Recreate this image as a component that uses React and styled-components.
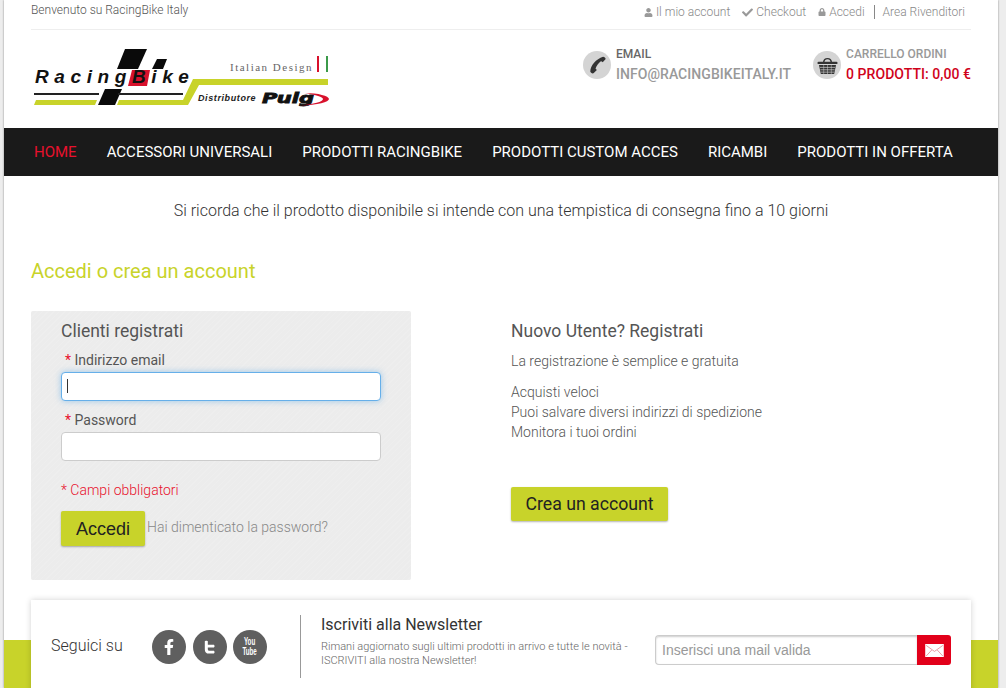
import React from "react";
import styled, { createGlobalStyle } from "styled-components";
import { FaUser, FaCheck, FaLock, FaFacebookF } from "react-icons/fa";

const GlobalStyle = createGlobalStyle`
  html, body {
    margin: 0;
    height: 688px;
    overflow: hidden;
    background: #ededed;
  }
  * { box-sizing: border-box; }
`;

const NAV_ITEMS = [
  "Home",
  "Accessori universali",
  "Prodotti RacingBike",
  "Prodotti custom acces",
  "Ricambi",
  "Prodotti in offerta",
];

const Logo = () => (
  <LogoSvg viewBox="31 46 300 62" width="300" height="62">
    <polygon points="125,49 147,49 138,69 117,69" fill="#0a0a0a" />
    <polygon points="157,59 167,59 163,69 152,69" fill="#0a0a0a" />
    <polygon points="132,70 150,70 147,86 128,86" fill="#d8112c" />
    <polygon points="105,89 122,89 115,105 98,105" fill="#0a0a0a" />
    <rect x="34" y="93" width="65" height="2" fill="#222" />
    <rect x="118" y="93" width="65" height="2" fill="#222" />
    <polygon points="36,100 97,100 95,105 34,105" fill="#c8d32a" />
    <polygon points="119,100 183,100 193,79 328,79 328,85 199,85 188,105 117,105" fill="#c8d32a" />
    <LogoName x="35" y="83">RacingBike</LogoName>
    <LogoTag x="230" y="71">Italian Design</LogoTag>
    <rect x="317" y="56" width="2" height="16" fill="#d8112c" />
    <rect x="326" y="56" width="2" height="16" fill="#3b9a4a" />
    <LogoSub x="198" y="101">Distributore</LogoSub>
    <LogoPuig x="262" y="103" textLength="52" lengthAdjust="spacingAndGlyphs">Puig</LogoPuig>
    <path d="M305 93 C318 93 329 96 329 99 C329 102 318 105 300 105.500 C314 104 323 102 323 99 C323 97 316 95 305 93Z" fill="#d8112c" />
  </LogoSvg>
);

const PhoneIcon = () => (
  <svg viewBox="0 0 24 24" width="21" height="21">
    <path
      d="M19.500 2c1.500.2 2.800 1.300 3 2.700l-3.400 3.600c-.7-.5-1.300-1-2.100-1.100-2.700 2-5 5.200-6.100 8.200.4.700.9 1.200 1.500 1.700l-3.800 3.800c-1.600.5-3.300-.5-3.700-2C5 12 11.500 4.500 19.500 2z"
      fill="#333"
    />
  </svg>
);

const BasketIcon = () => (
  <svg viewBox="0 0 22 20" width="21" height="19">
    <path d="M7 6.500 C7.500 1.500 14.500 1.500 15 6.500" fill="none" stroke="#333" strokeWidth="1.500" />
    <rect x="0.500" y="6" width="21" height="2.500" rx="1" fill="#333" />
    <path d="M2 9.500 H20 L18 19 H4 Z" fill="#333" />
    <path d="M3 12 H19 M3.500 14.500 H18.500 M4 17 H18" stroke="#d4d4d4" strokeWidth="0.700" />
    <path d="M7 9.500 V19 M11 9.500 V19 M15 9.500 V19" stroke="#d4d4d4" strokeWidth="0.500" />
  </svg>
);

const TwitterT = () => (
  <svg viewBox="0 0 16 16" width="15" height="15">
    <path
      d="M3 1.500c0-.9 3.200-.9 3.200 0V5h6c1.600 0 1.600 3 0 3h-6v1.500c0 1.300.8 2 2 2h4c1.600 0 1.600 3 0 3H7.500C4.500 14.500 3 12.800 3 10z"
      fill="#fff"
    />
  </svg>
);

const MailIcon = () => (
  <svg viewBox="0 0 20 14" width="19" height="13">
    <rect width="20" height="14" fill="#fff" />
    <path d="M1 1.500 L10 8 L19 1.500 M1 13 L7 6.500 M19 13 L13 6.500" fill="none" stroke="#e58a94" strokeWidth="0.9" />
  </svg>
);

const App = () => {
  return (
    <Page>
      <GlobalStyle />
      <Inner>
        <TopBar>
          <Welcome>Benvenuto su RacingBike Italy</Welcome>
          <TopLinks>
            <TopLink><FaUser size={9} /> Il mio account</TopLink>
            <TopLink><FaCheck size={11} /> Checkout</TopLink>
            <TopLink><FaLock size={8} /> Accedi</TopLink>
            <TopSeparator />
            <TopLink>Area Rivenditori</TopLink>
          </TopLinks>
        </TopBar>
        <Header>
          <Logo />
          <HeaderInfo>
            <InfoBlock>
              <InfoCircle><PhoneIcon /></InfoCircle>
              <div>
                <InfoLabel>EMAIL</InfoLabel>
                <InfoValue>INFO@RACINGBIKEITALY.IT</InfoValue>
              </div>
            </InfoBlock>
            <InfoBlock>
              <InfoCircle><BasketIcon /></InfoCircle>
              <div>
                <InfoLabel $muted>CARRELLO ORDINI</InfoLabel>
                <InfoValue $red>0 PRODOTTI: 0,00 €</InfoValue>
              </div>
            </InfoBlock>
          </HeaderInfo>
        </Header>
      </Inner>

      <Nav>
        {NAV_ITEMS.map((item, index) => (
          <NavItem key={item} $active={index === 0}>{item}</NavItem>
        ))}
      </Nav>

      <Notice>Si ricorda che il prodotto disponibile si intende con una tempistica di consegna fino a 10 giorni</Notice>

      <Inner>
        <PageTitle>Accedi o crea un account</PageTitle>
        <Columns>
          <LoginPanel>
            <PanelTitle>Clienti registrati</PanelTitle>
            <FieldLabel><Star>*</Star> Indirizzo email</FieldLabel>
            <InputWrap>
              <TextInput $focused type="text" />
              <Caret />
            </InputWrap>
            <FieldLabel><Star>*</Star> Password</FieldLabel>
            <InputWrap>
              <TextInput type="password" />
            </InputWrap>
            <Required>* Campi obbligatori</Required>
            <LoginActions>
              <LoginButton>Accedi</LoginButton>
              <Forgot>Hai dimenticato la password?</Forgot>
            </LoginActions>
          </LoginPanel>
          <RegisterColumn>
            <PanelTitle>Nuovo Utente? Registrati</PanelTitle>
            <Lead>La registrazione è semplice e gratuita</Lead>
            <Benefits>
              <div>Acquisti veloci</div>
              <div>Puoi salvare diversi indirizzi di spedizione</div>
              <div>Monitora i tuoi ordini</div>
            </Benefits>
            <CreateButton>Crea un account</CreateButton>
          </RegisterColumn>
        </Columns>
      </Inner>

      <FooterBand>
        <FooterCard>
          <FollowText>Seguici su</FollowText>
          <Socials>
            <Social><FaFacebookF size={16} /></Social>
            <Social><TwitterT /></Social>
            <Social><YouTubeText>You<br />Tube</YouTubeText></Social>
          </Socials>
          <Divider />
          <NewsText>
            <NewsTitle>Iscriviti alla Newsletter</NewsTitle>
            <NewsDesc>Rimani aggiornato sugli ultimi prodotti in arrivo e tutte le novità - ISCRIVITI alla nostra Newsletter!</NewsDesc>
          </NewsText>
          <NewsForm>
            <NewsInput placeholder="Inserisci una mail valida" />
            <NewsButton><MailIcon /></NewsButton>
          </NewsForm>
        </FooterCard>
      </FooterBand>
    </Page>
  );
};

const Page = styled.div`
  width: 994px;
  height: 688px;
  margin-left: 4px;
  background: #fff;
  box-shadow: 0 0 2px #888;
  font-family: Roboto, sans-serif;
  overflow: hidden;
`;

const Inner = styled.div`
  padding: 0 27px;
`;

const TopBar = styled.div`
  display: flex;
  justify-content: space-between;
  height: 30px;
  border-bottom: 1px solid #eee;
  font-size: 12px;
  font-weight: 300;
  color: #555;
`;

const Welcome = styled.div`
  line-height: 20px;
`;

const TopLinks = styled.div`
  display: flex;
  align-items: center;
  height: 24px;
  padding-right: 6px;
  color: #888;
`;

const TopLink = styled.span`
  display: flex;
  align-items: center;
  gap: 3px;
  margin-left: 12px;

  svg {
    color: #999;
  }
`;

const TopSeparator = styled.span`
  width: 1px;
  height: 14px;
  margin-left: 9px;
  margin-right: -4px;
  background: #888;
`;

const Header = styled.div`
  display: flex;
  justify-content: space-between;
  height: 98px;
  padding-top: 16px;
`;

const LogoSvg = styled.svg`
  display: block;
`;

const LogoName = styled.text`
  font-family: "Liberation Sans", sans-serif;
  font-size: 19px;
  font-weight: 700;
  font-style: italic;
  letter-spacing: 5.600px;
  fill: #111;
`;

const LogoTag = styled.text`
  font-family: "Liberation Serif", serif;
  font-size: 11px;
  letter-spacing: 1.500px;
  fill: #666;
`;

const LogoSub = styled.text`
  font-family: "Liberation Sans", sans-serif;
  font-size: 9px;
  font-weight: 700;
  font-style: italic;
  letter-spacing: 0.600px;
  fill: #222;
`;

const LogoPuig = styled.text`
  font-family: "DejaVu Sans", sans-serif;
  font-size: 14px;
  font-weight: 700;
  font-style: italic;
  fill: #111;
  stroke: #111;
  stroke-width: 0.800px;
`;

const HeaderInfo = styled.div`
  display: flex;
  gap: 22px;
`;

const InfoBlock = styled.div`
  display: flex;
  gap: 5px;
`;

const InfoCircle = styled.div`
  display: flex;
  align-items: center;
  justify-content: center;
  width: 28px;
  height: 28px;
  margin-top: 5px;
  border-radius: 50%;
  background: #d4d4d4;
`;

const InfoLabel = styled.div`
  font-size: 12px;
  font-weight: 500;
  line-height: 16px;
  color: ${(props) => (props.$muted ? "#999" : "#666")};
`;

const InfoValue = styled.div`
  margin-top: 2px;
  font-size: 14px;
  font-weight: 500;
  line-height: 20px;
  letter-spacing: 0.050px;
  color: ${(props) => (props.$red ? "#d0021b" : "#999")};
`;

const Nav = styled.nav`
  display: flex;
  gap: 30px;
  height: 48px;
  padding-left: 30px;
  background: #1a1a1a;
`;

const NavItem = styled.a`
  font-size: 15px;
  line-height: 48px;
  text-transform: uppercase;
  color: ${(props) => (props.$active ? "#e8112d" : "#fff")};
`;

const Notice = styled.div`
  margin-top: 25px;
  font-size: 16px;
  font-weight: 300;
  line-height: 20px;
  text-align: center;
  color: #333;
`;

const PageTitle = styled.h1`
  margin: 38px 0 28px;
  font-size: 20px;
  font-weight: 400;
  line-height: 24px;
  color: #c8d32a;
`;

const Columns = styled.div`
  display: flex;
  gap: 100px;
`;

const LoginPanel = styled.div`
  width: 380px;
  height: 269px;
  padding: 10px 30px 0;
  border-radius: 2px;
  background-color: #ececec;
  background-image: repeating-linear-gradient(135deg, rgba(255, 255, 255, 0.1) 0 1px, transparent 1px 4px);
`;

const PanelTitle = styled.h2`
  margin: 0;
  font-size: 17.500px;
  font-weight: 400;
  line-height: 20px;
  color: #555;
`;

const FieldLabel = styled.div`
  margin-top: 9px;
  padding-left: 4px;
  font-size: 14px;
  line-height: 20px;
  color: #555;
`;

const Star = styled.span`
  color: #e8112d;
`;

const InputWrap = styled.div`
  position: relative;
  margin-top: 2px;
`;

const TextInput = styled.input`
  display: block;
  width: 100%;
  height: 29px;
  border: 1px solid ${(props) => (props.$focused ? "#66afe9" : "#ccc")};
  border-radius: 4px;
  outline: none;
  background: #fff;
  box-shadow: ${(props) => (props.$focused ? "0 0 6px rgba(102, 175, 233, 0.6)" : "none")};
`;

const Caret = styled.span`
  position: absolute;
  left: 6px;
  top: 7px;
  width: 1px;
  height: 14px;
  background: #333;
`;

const Required = styled.div`
  margin-top: 19px;
  font-size: 14px;
  font-weight: 300;
  line-height: 20px;
  color: #e8112d;
`;

const LoginActions = styled.div`
  display: flex;
  align-items: center;
  gap: 2px;
  margin-top: 11px;
`;

const LoginButton = styled.div`
  width: 84px;
  height: 35px;
  border-radius: 2px;
  background: #c8d32a;
  box-shadow: 0 1px 2px rgba(0, 0, 0, 0.3);
  font-family: "Liberation Sans", sans-serif;
  font-size: 18px;
  line-height: 36px;
  text-align: center;
  color: #222;
`;

const Forgot = styled.a`
  margin-top: -4px;
  font-size: 14px;
  font-weight: 300;
  color: #888;
`;

const RegisterColumn = styled.div`
  padding-top: 10px;
  font-size: 14px;
  font-weight: 300;
  color: #555;
`;

const Lead = styled.div`
  margin-top: 10px;
  line-height: 20px;
`;

const Benefits = styled.div`
  margin-top: 11px;
  line-height: 20px;
`;

const CreateButton = styled.div`
  width: 157px;
  height: 34px;
  margin-top: 45px;
  border-radius: 2px;
  background: #c8d32a;
  box-shadow: 0 1px 2px rgba(0, 0, 0, 0.3);
  font-size: 17.700px;
  font-weight: 400;
  line-height: 34px;
  text-align: center;
  color: #222;
`;

const FooterBand = styled.div`
  margin-top: 20px;
  padding: 0 27px;
  background: linear-gradient(#fff 40px, #c8d32a 40px);
`;

const FooterCard = styled.div`
  display: flex;
  align-items: flex-start;
  height: 100px;
  padding: 15px 20px 0;
  background: #fff;
  box-shadow: 0 0 6px rgba(0, 0, 0, 0.18);
`;

const FollowText = styled.div`
  width: 101px;
  padding-top: 21px;
  font-size: 16px;
  font-weight: 300;
  line-height: 20px;
  color: #333;
`;

const Socials = styled.div`
  display: flex;
  gap: 6.500px;
  width: 148px;
  padding-top: 15px;
`;

const Social = styled.div`
  display: flex;
  align-items: center;
  justify-content: center;
  width: 34px;
  height: 34px;
  border-radius: 50%;
  background: #5f5f5f;
  color: #fff;
`;

const YouTubeText = styled.div`
  font-family: "Liberation Sans", sans-serif;
  font-size: 10px;
  font-weight: 700;
  line-height: 10px;
  text-align: center;
  transform: scaleX(0.62);
`;

const Divider = styled.div`
  width: 1px;
  height: 63px;
  background: #999;
`;

const NewsText = styled.div`
  width: 354px;
  padding: 0 14px 0 20px;
`;

const NewsTitle = styled.div`
  font-size: 16px;
  line-height: 20px;
  color: #333;
`;

const NewsDesc = styled.div`
  margin-top: 5px;
  font-size: 11px;
  font-weight: 300;
  line-height: 14px;
  color: #666;
`;

const NewsForm = styled.div`
  display: flex;
  margin-top: 20px;
`;

const NewsInput = styled.input`
  width: 262px;
  height: 30px;
  padding: 0 6px;
  border: 1px solid #ccc;
  border-right: none;
  border-radius: 4px 0 0 4px;
  outline: none;
  box-shadow: inset 0 1px 2px rgba(0, 0, 0, 0.2);
  font-family: "Liberation Sans", sans-serif;
  font-size: 14px;

  &::placeholder {
    color: #999;
  }
`;

const NewsButton = styled.div`
  display: flex;
  align-items: center;
  justify-content: center;
  width: 34px;
  height: 30px;
  border-radius: 0 3px 3px 0;
  background: #e2001a;
`;

export default App;
